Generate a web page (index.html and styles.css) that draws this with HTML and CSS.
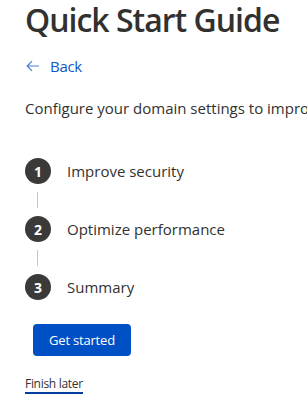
FILE: index.html
```html
<!DOCTYPE html>
<html lang="en">
<head>
    <meta charset="UTF-8">
    <meta name="viewport" content="width=device-width, initial-scale=1.0">
    <title>Quick Start Guide</title>
    <link rel="stylesheet" href="styles.css">
</head>
<body>
    <div class="guide">
        <h1 class="guide-title">Quick Start Guide</h1>

        <a class="back-link" href="#">
            <svg class="back-icon" width="14" height="12" viewBox="0 0 14 12" aria-hidden="true">
                <path d="M13 6H1.5M6 1.2L1.2 6L6 10.8" fill="none" stroke="currentColor" stroke-width="1.2"/>
            </svg>
            <span>Back</span>
        </a>

        <p class="intro">Configure your domain settings to improve security and performance.</p>

        <ol class="steps">
            <li class="step">
                <span class="step-num">1</span>
                <span class="step-label">Improve security</span>
            </li>
            <li class="step-line"></li>
            <li class="step">
                <span class="step-num">2</span>
                <span class="step-label">Optimize performance</span>
            </li>
            <li class="step-line"></li>
            <li class="step">
                <span class="step-num">3</span>
                <span class="step-label">Summary</span>
            </li>
        </ol>

        <button class="start-button" type="button">Get started</button>

        <a class="finish-link" href="#">Finish later</a>
    </div>
</body>
</html>
```

FILE: styles.css
```css
body {
    margin: 0;
    padding: 0;
    font-family: "Open Sans", "Noto Sans", sans-serif;
    color: #323130;
    background: #fff;
    overflow: hidden;
}

.guide {
    padding: 0 0 0 25px;
    white-space: nowrap;
}

.guide-title {
    margin: 0;
    font-size: 32px;
    line-height: 40px;
    font-weight: 600;
    letter-spacing: -1px;
    color: #323130;
}

.back-link {
    display: flex;
    align-items: center;
    gap: 10px;
    margin-top: 16px;
    height: 20px;
    font-size: 15px;
    letter-spacing: -0.3px;
    color: #0f58c8;
    text-decoration: none;
}

.back-icon {
    margin-left: 1px;
    color: #4a7fd6;
}

.intro {
    margin: 22px 0 0;
    font-size: 15px;
    line-height: 20px;
}

.steps {
    list-style: none;
    margin: 40px 0 0;
    padding: 0;
}

.step {
    display: flex;
    align-items: center;
    gap: 16px;
    height: 26px;
}

.step-num {
    width: 26px;
    height: 26px;
    border-radius: 50%;
    background: #3b3a39;
    color: #fff;
    font-size: 14px;
    font-weight: 700;
    display: flex;
    align-items: center;
    justify-content: center;
}

.step-label {
    font-size: 15px;
}

.step-line {
    width: 1px;
    height: 16px;
    margin: 8px 0 8px 12px;
    background: #c8c6c4;
}

.start-button {
    display: block;
    margin: 24px 0 0 8px;
    width: 98px;
    height: 32px;
    padding: 0;
    border: none;
    border-radius: 4px;
    background: #0050c5;
    color: #fff;
    font-family: inherit;
    font-size: 13px;
    letter-spacing: -0.2px;
    cursor: pointer;
}

.finish-link {
    display: inline-block;
    margin-top: 20px;
    font-size: 12px;
    line-height: 16px;
    letter-spacing: -0.3px;
    color: #323130;
    text-decoration: none;
    border-bottom: 2px solid #003f9e;
}
```
